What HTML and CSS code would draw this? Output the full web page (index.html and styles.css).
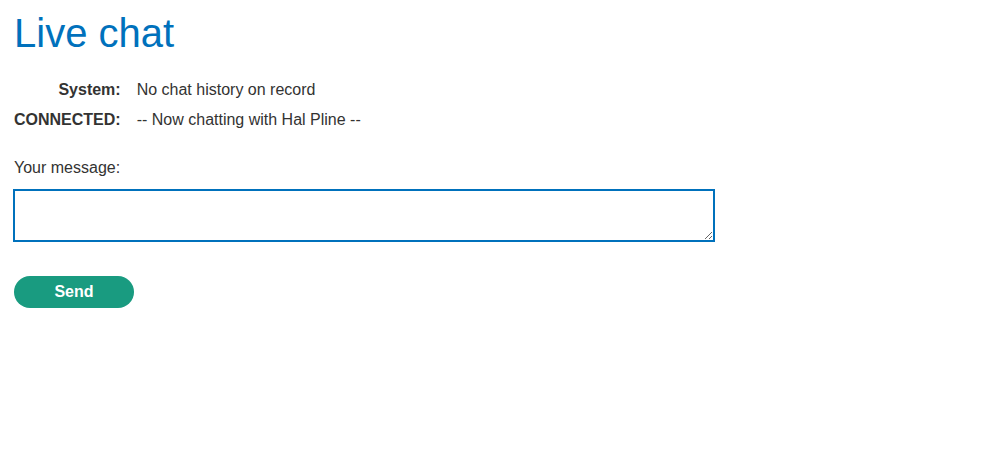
FILE: index.html
```html
<!DOCTYPE html>
<html>
<head>
<meta charset="utf-8">
<link rel="stylesheet" href="styles.css">
</head>
<body>
<div class="page">
  <h1 class="title">Live chat</h1>
  <table class="chat">
    <tr><th class="who">System:</th><td class="msg">No chat history on record</td></tr>
    <tr><th class="who">CONNECTED:</th><td class="msg">-- Now chatting with Hal Pline --</td></tr>
  </table>
  <form class="form">
    <label class="label" for="m">Your message:</label>
    <textarea id="m" class="input" autofocus></textarea>
    <button type="button" class="send">Send</button>
  </form>
</div>
</body>
</html>
```
FILE: styles.css
```css
html, body { margin: 0; padding: 0; background: #fff; }
body { font-family: "Liberation Sans", Arial, sans-serif; color: #333332; font-size: 16px; }
.page { padding: 0 14px; }
.title { margin: 0; padding-top: 11px; font-size: 40px; font-weight: normal; color: #0071bc; line-height: 44px; }
.chat { border-collapse: collapse; margin-top: 20px; }
.chat th, .chat td { padding: 0; height: 30px; vertical-align: middle; }
.who { text-align: right; font-weight: bold; padding-right: 16px !important; }
.msg { text-align: left; }
.form { margin-top: 24px; display: flex; flex-direction: column; align-items: flex-start; }
.label { display: block; line-height: 18px; }
.input { margin: 12px 0 0 -1px; width: 702px; height: 53px; box-sizing: border-box; border: 2px solid #0071bc; outline: none; font-family: inherit; font-size: 16px; padding: 6px; resize: both; }
.send { margin-top: 34px; width: 120px; height: 32px; border: none; border-radius: 20px; background: #199b80; color: #fff; font-family: inherit; font-weight: bold; font-size: 16px; padding: 0; }
```
